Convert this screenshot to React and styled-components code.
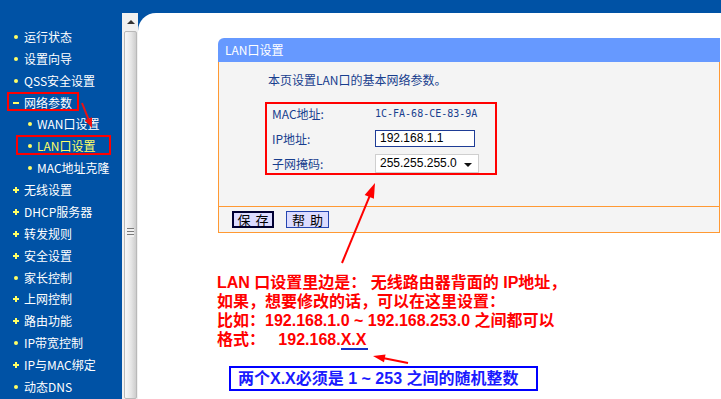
import React from "react";
import styled, { createGlobalStyle } from "styled-components";

const GlobalStyle = createGlobalStyle`
  html, body { margin: 0; padding: 0; background: #0052a5; overflow: hidden; }
  body { font-family: "Noto Sans CJK SC", "Liberation Sans", sans-serif; }
`;

const Page = styled.div`
  position: relative; display: flex; width: 721px; height: 399px; overflow: hidden; background: #0052a5;
`;

const Sidebar = styled.ul`
  width: 122px; flex-shrink: 0; margin: 0; padding: 26px 0 0; list-style: none;
`;

const MenuItem = styled.li`
  display: flex; align-items: center; height: 21.875px; padding-left: ${p => (p.$sub ? 24 : 11)}px;
  font-size: 12px; line-height: 14px; white-space: nowrap;
  color: ${p => (p.$active ? "#ffff66" : "#ffffff")};
`;

const Bullet = styled.span`
  position: relative; width: 13px; height: 6px; flex-shrink: 0;
  &::before {
    content: ""; position: absolute; background: #ffff66;
    ${p => (p.$kind === "dot"
      ? `left: ${p.$sub ? 4 : 3}px; top: 1px; width: 4px; height: 4px; border-radius: 50%;`
      : "left: 2px; top: 2px; width: 6px; height: 2px;")}
  }
  &::after {
    content: ""; position: absolute; background: #ffff66;
    ${p => (p.$kind === "plus" ? "left: 4px; top: 0; width: 2px; height: 6px;" : "display: none;")}
  }
`;

const Scroll = styled.div`
  width: 16px; flex-shrink: 0; margin-top: 13px; background: #f1f1f1;
  display: flex; flex-direction: column;
`;

const ScrollArrow = styled.div`
  height: 18px; display: flex; align-items: center; justify-content: center; padding-left: 2px;
  &::before { content: ""; border: 4px solid transparent; border-top: 0; border-bottom: 4px solid #333; }
`;

const Thumb = styled.div`
  flex: 1; margin: 0 1px 0 2px; border: 1px solid #b9b9b9; border-radius: 2px;
  background: linear-gradient(to right, #f8f8f8, #e6e6e6 55%, #cdcdcd);
  display: flex; justify-content: center; padding-top: 196px;
`;

const Grip = styled.div`
  width: 7px; height: 9px;
  background: repeating-linear-gradient(to bottom, #7a7a7a 0 1px, #f0f0f0 1px 3px);
`;

const Main = styled.main`
  flex: 1; min-width: 0; margin-top: 13px; padding: 25px 1px 0 80px;
  background: #ffffff; border-top-left-radius: 18px;
`;

const PanelTitle = styled.div`
  height: 24px; line-height: 24px; padding-left: 7px; font-size: 12px; color: #fff;
  background: #6699ff; border-top-left-radius: 6px;
`;

const PanelBody = styled.div`
  height: 145px; box-sizing: border-box; padding: 9px 0 0 46px;
  background: #f4f4f4; border: 1px solid #ff9933; border-top: 0;
`;

const Intro = styled.div`
  margin-left: 3px; font-size: 12px; line-height: 18px; color: #183e8e;
`;

const InfoBox = styled.div`
  width: 232px; height: 73px; box-sizing: border-box; margin-top: 13px; padding-left: 5px;
  border: 2px solid #ff0000;
  display: grid; grid-template-columns: 103px 1fr; grid-template-rows: repeat(3, 25px);
  align-items: center; align-content: center;
`;

const Label = styled.span`
  font-size: 12px; line-height: 14px; color: #183e8e;
`;

const MacValue = styled.span`
  font: 10px/14px "DejaVu Sans Mono", "Liberation Mono", monospace; color: #183e8e;
`;

const TextInput = styled.div`
  width: 100px; height: 17px; box-sizing: border-box; padding-left: 4px; background: #fff;
  border: 1px solid #1e3c96; font: 12px/15px "Liberation Sans", sans-serif; color: #000;
`;

const FakeSelect = styled.div`
  width: 104px; height: 19px; box-sizing: border-box; padding: 0 6px 0 4px; background: #fff;
  border: 1px solid #cfcfcf; display: flex; align-items: center; justify-content: space-between;
  font: 12px/17px "Liberation Sans", sans-serif; color: #000;
  &::after { content: ""; border: 4px solid transparent; border-bottom: 0; border-top: 4px solid #111; margin-top: 2px; }
`;

const Footer = styled.div`
  height: 26px; box-sizing: border-box; padding: 0 0 1px 13px; display: flex; align-items: center; gap: 12px;
  background: #f4f4f4; border: 1px solid #ff9933; border-top: 0;
`;

const Btn = styled.button`
  width: ${p => p.$w}px; height: 17px; box-sizing: border-box; padding: 0;
  display: flex; align-items: center; justify-content: center; gap: 5px;
  background: #dcdcff; color: #000; font: 13px/13px "Noto Sans CJK SC", sans-serif;
  border: ${p => (p.$focus ? "2px solid #000033" : "1px solid #2545b0")};
`;

const Note = styled.div`
  margin: 40px 0 0 -1px; color: #ff0000; white-space: pre;
  font: bold 16px/19px "Liberation Sans", "Noto Sans CJK SC", sans-serif;
`;

const Under = styled.span`
  display: inline-block; line-height: 17px; border-bottom: 2px solid #1530c8; padding-right: 2px;
`;

const Tip = styled.div`
  width: 309px; height: 25px; box-sizing: border-box; margin: 16px 0 0 11px; padding-left: 7px;
  border: 2px solid #0000ff; color: #1a1aff; white-space: pre;
  font: bold 16px/21px "Liberation Sans", "Noto Sans CJK SC", sans-serif;
`;

const Overlay = styled.svg`
  position: absolute; left: 0; top: 0; pointer-events: none;
`;

const menu = [
  { text: "运行状态", kind: "dot" },
  { text: "设置向导", kind: "dot" },
  { text: "QSS安全设置", kind: "dot" },
  { text: "网络参数", kind: "minus" },
  { text: "WAN口设置", kind: "dot", sub: true },
  { text: "LAN口设置", kind: "dot", sub: true, active: true },
  { text: "MAC地址克隆", kind: "dot", sub: true },
  { text: "无线设置", kind: "plus" },
  { text: "DHCP服务器", kind: "plus" },
  { text: "转发规则", kind: "plus" },
  { text: "安全设置", kind: "plus" },
  { text: "家长控制", kind: "dot" },
  { text: "上网控制", kind: "plus" },
  { text: "路由功能", kind: "plus" },
  { text: "IP带宽控制", kind: "dot" },
  { text: "IP与MAC绑定", kind: "plus" },
  { text: "动态DNS", kind: "dot" },
];

const Arrow = ({ x1, y1, x2, y2, len, half, width = 2, color = "#ff0000" }) => {
  const dx = x2 - x1, dy = y2 - y1;
  const d = Math.hypot(dx, dy);
  const ux = dx / d, uy = dy / d;
  const bx = x2 - ux * len, by = y2 - uy * len;
  const pts = `${x2},${y2} ${bx - uy * half},${by + ux * half} ${bx + uy * half},${by - ux * half}`;
  return (
    <g>
      <line x1={x1} y1={y1} x2={bx + ux * 2} y2={by + uy * 2} stroke={color} strokeWidth={width} />
      <polygon points={pts} fill={color} />
    </g>
  );
};

const App = () => (
  <Page>
    <GlobalStyle />
    <Sidebar>
      {menu.map(m => (
        <MenuItem key={m.text} $sub={m.sub} $active={m.active}>
          <Bullet $kind={m.kind} $sub={m.sub} />
          {m.text}
        </MenuItem>
      ))}
    </Sidebar>
    <Scroll>
      <ScrollArrow />
      <Thumb><Grip /></Thumb>
    </Scroll>
    <Main>
      <section>
        <PanelTitle>LAN口设置</PanelTitle>
        <PanelBody>
          <Intro>本页设置LAN口的基本网络参数。</Intro>
          <InfoBox>
            <Label>MAC地址:</Label>
            <MacValue>1C-FA-68-CE-83-9A</MacValue>
            <Label>IP地址:</Label>
            <TextInput>192.168.1.1</TextInput>
            <Label>子网掩码:</Label>
            <FakeSelect>255.255.255.0</FakeSelect>
          </InfoBox>
        </PanelBody>
        <Footer>
          <Btn $w={42} $focus><span>保</span><span>存</span></Btn>
          <Btn $w={43}><span>帮</span><span>助</span></Btn>
        </Footer>
      </section>
      <Note>
        {"LAN 口设置里边是： 无线路由器背面的 IP地址，\n如果，想要修改的话，可以在这里设置：\n比如：192.168.1.0 ~ 192.168.253.0 之间都可以\n格式：   192.168."}
        <Under>X.X</Under>
      </Note>
      <Tip>{"两个X.X必须是 1 ~ 253 之间的随机整数"}</Tip>
    </Main>
    <Overlay width="721" height="399" viewBox="0 0 721 399">
      <rect x="8" y="93" width="70" height="17" fill="none" stroke="#ff0000" strokeWidth="2" />
      <rect x="17" y="136" width="93" height="18" fill="none" stroke="#ff0000" strokeWidth="2" />
      <Arrow x1={82} y1={103} x2={92} y2={128} len={10} half={4} color="#ee1111" />
      <Arrow x1={342} y1={263} x2={375} y2={183} len={15} half={5} />
      <Arrow x1={408} y1={363} x2={373} y2={356} len={12} half={4} />
    </Overlay>
  </Page>
);

export default App;
